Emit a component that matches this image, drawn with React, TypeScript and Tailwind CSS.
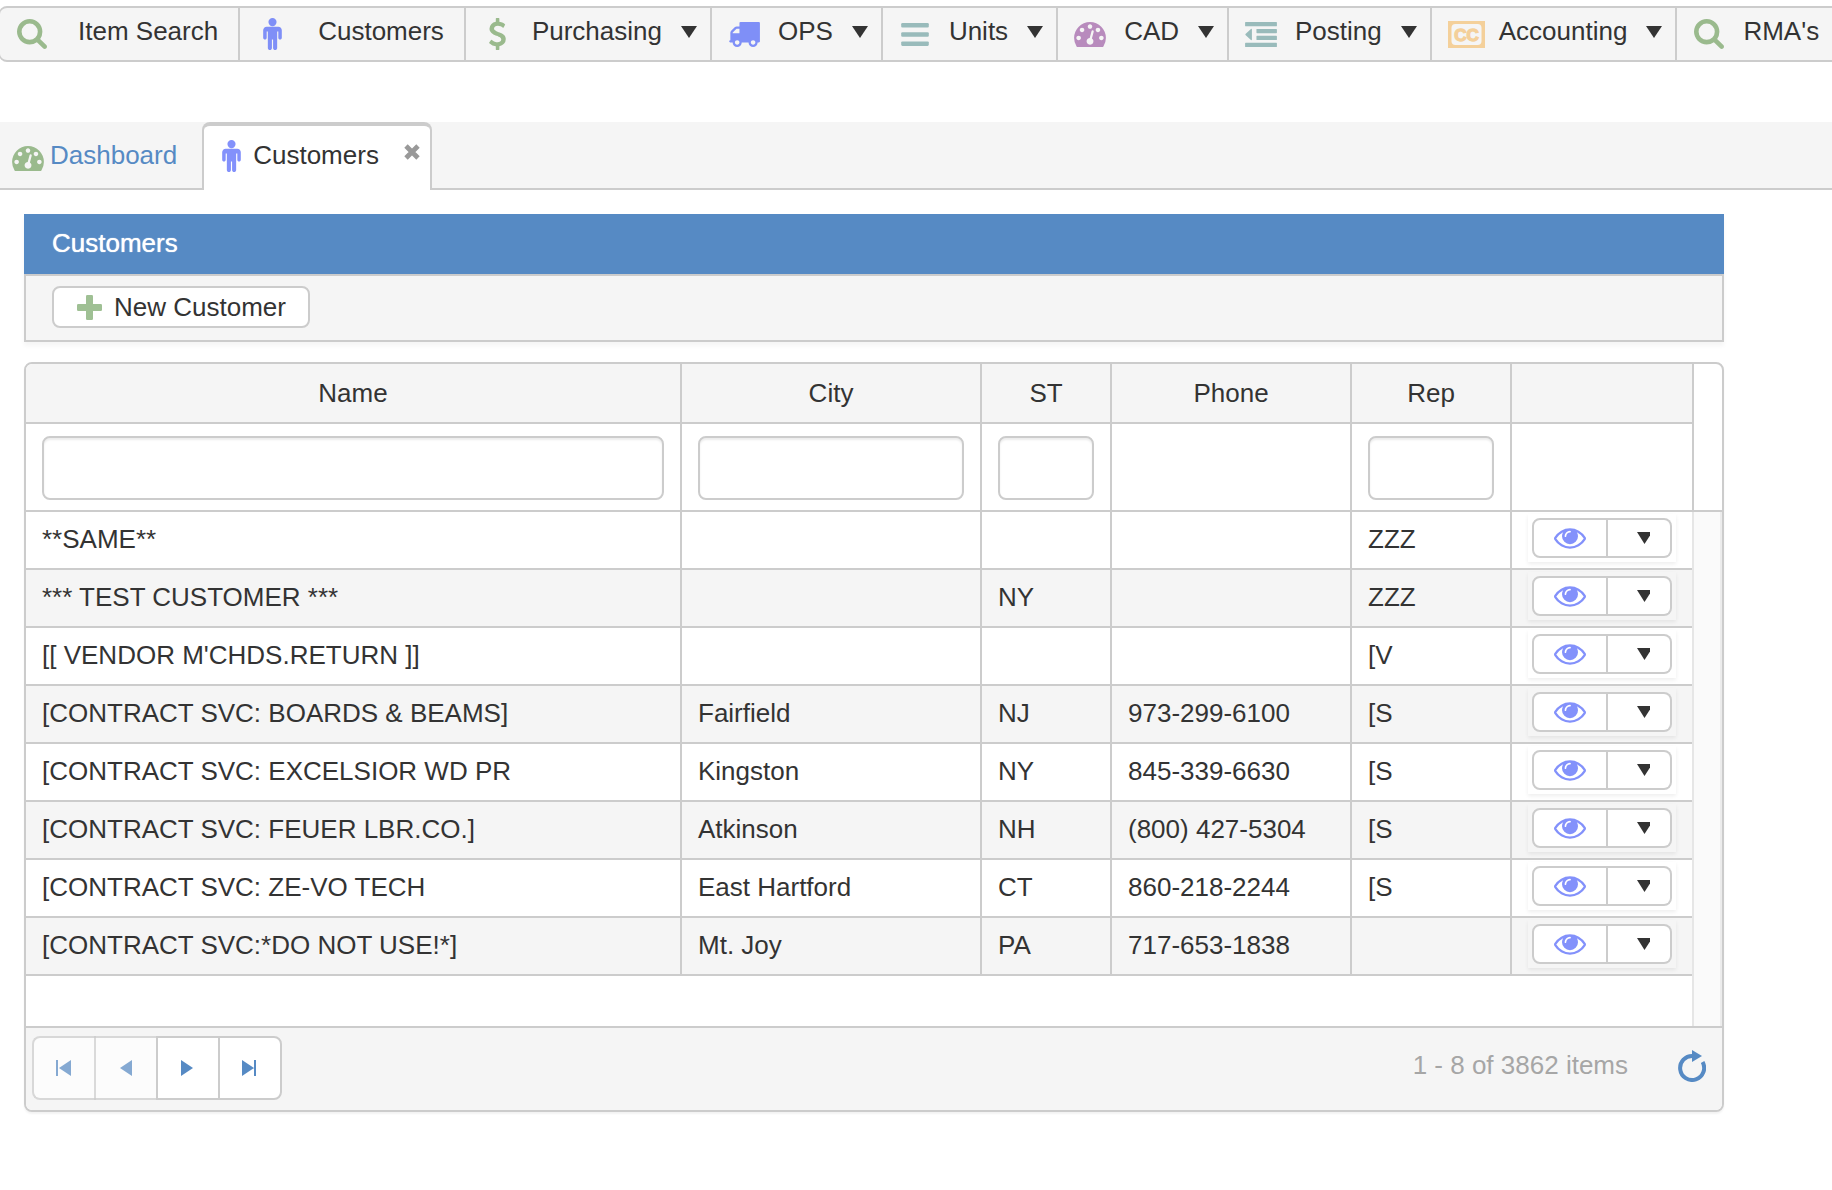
import React, { useMemo, useState } from 'react';

// Sample page of customers, the grid shows eight at a time
const sampleCustomers = [
  { id: 1, name: '**SAME**', city: '', st: '', phone: '', rep: 'ZZZ' },
  { id: 2, name: '*** TEST CUSTOMER ***', city: '', st: 'NY', phone: '', rep: 'ZZZ' },
  { id: 3, name: "[[ VENDOR M'CHDS.RETURN ]]", city: '', st: '', phone: '', rep: '[V' },
  { id: 4, name: '[CONTRACT SVC: BOARDS & BEAMS]', city: 'Fairfield', st: 'NJ', phone: '973-299-6100', rep: '[S' },
  { id: 5, name: '[CONTRACT SVC: EXCELSIOR WD PR', city: 'Kingston', st: 'NY', phone: '845-339-6630', rep: '[S' },
  { id: 6, name: '[CONTRACT SVC: FEUER LBR.CO.]', city: 'Atkinson', st: 'NH', phone: '(800) 427-5304', rep: '[S' },
  { id: 7, name: '[CONTRACT SVC: ZE-VO TECH', city: 'East Hartford', st: 'CT', phone: '860-218-2244', rep: '[S' },
  { id: 8, name: '[CONTRACT SVC:*DO NOT USE!*]', city: 'Mt. Joy', st: 'PA', phone: '717-653-1838', rep: '' },
];

type IconProps = { className?: string };

const SearchIcon = ({ className }: IconProps) => (
  <svg viewBox="64 128 1664 1664" fill="currentColor" className={className} aria-hidden="true">
    <path d="M1216 832q0-185-131.5-316.5t-316.5-131.5-316.5 131.5-131.5 316.5 131.5 316.5 316.5 131.5 316.5-131.5 131.5-316.5zm512 832q0 52-38 90t-90 38q-54 0-90-38l-343-342q-179 124-399 124-143 0-273.5-55.5t-225-150-150-225-55.5-273.5 55.5-273.5 150-225 225-150 273.5-55.5 273.5 55.5 225 150 150 225 55.5 273.5q0 220-124 399l343 343q37 37 37 90z" />
  </svg>
);

const PersonIcon = ({ className }: IconProps) => (
  <svg viewBox="256 32 1024 1760" fill="currentColor" className={className} aria-hidden="true">
    <path d="M1280 704v416q0 40-28 68t-68 28-68-28-28-68v-352h-64v912q0 46-33 79t-79 33-79-33-33-79v-464h-64v464q0 46-33 79t-79 33-79-33-33-79v-912h-64v352q0 40-28 68t-68 28-68-28-28-68v-416q0-80 56-136t136-56h640q80 0 136 56t56 136zm-288-448q0 93-65.5 158.5t-158.5 65.5-158.5-65.5-65.5-158.5 65.5-158.5 158.5-65.5 158.5 65.5 65.5 158.5z" />
  </svg>
);

const DollarIcon = ({ className }: IconProps) => (
  <svg viewBox="430 0 940 1792" fill="currentColor" className={className} aria-hidden="true">
    <path d="M1362 1185q0 153-99.5 263.5t-258.5 136.5v175q0 14-9 23t-23 9h-135q-13 0-22.5-9.5t-9.5-22.5v-175q-66-9-127.5-31t-101.5-44.5-74-48-46.5-37.5-17.5-18q-17-21-2-41l103-135q7-10 23-12 15-2 24 9l2 2q113 99 243 125 37 8 74 8 81 0 142.5-43t61.5-122q0-28-15-53t-33.5-42-58.5-37.5-66-32-80-32.5q-39-16-61.5-25t-61.5-26.5-62.5-31-56.5-35.5-53.5-42.5-43.5-49-35.5-58-21-66.5-8.5-78q0-138 98-242t255-134v-180q0-13 9.5-22.5t22.5-9.5h135q14 0 23 9t9 23v176q57 6 110.5 23t87 33.5 63.5 37.5 39 29 15 14q17 18 5 38l-81 146q-8 15-23 16-14 3-27-7-3-3-14.5-12t-39-26.5-58.5-32-74.5-26-85.5-11.5q-95 0-155 43t-60 111q0 26 8.5 48t29.5 41.5 39.5 33 56 31 60.5 27 70 27.5q53 20 81 31.5t76 35 75.5 42.5 62 50 53 63.5 31.5 76.5 13 94z" />
  </svg>
);

const TruckIcon = ({ className }: IconProps) => (
  <svg viewBox="0 256 1792 1408" fill="currentColor" className={className} aria-hidden="true">
    <path d="M640 1408q0-52-38-90t-90-38-90 38-38 90 38 90 90 38 90-38 38-90zm-384-512h384v-256h-158q-13 0-22 9l-195 195q-9 9-9 22v30zm1280 512q0-52-38-90t-90-38-90 38-38 90 38 90 90 38 90-38 38-90zm256-1088v1024q0 15-4 26.5t-13.5 18.5-16.5 11.5-23.5 6-22.5 2-25.5 0-22.5-.5q0 106-75 181t-181 75-181-75-75-181h-384q0 106-75 181t-181 75-181-75-75-181h-64q-3 0-22.5.5t-25.5 0-22.5-2-23.5-6-16.5-11.5-13.5-18.5-4-26.5q0-26 19-45t45-19v-320q0-8-.5-35t0-38 2.5-34.5 6.5-37 14-30.5 22.5-30l198-198q19-19 50.5-32t58.5-13h160v-192q0-26 19-45t45-19h1024q26 0 45 19t19 45z" />
  </svg>
);

const BarsIcon = ({ className }: IconProps) => (
  <svg viewBox="0 0 1536 1280" fill="currentColor" className={className} aria-hidden="true">
    <rect width="1536" height="256" rx="64" />
    <rect y="512" width="1536" height="256" rx="64" />
    <rect y="1024" width="1536" height="256" rx="64" />
  </svg>
);

const GaugeIcon = ({ className }: IconProps) => (
  <svg viewBox="0 256 1792 1408" fill="currentColor" className={className} aria-hidden="true">
    <path d="M384 1152q0-53-37.5-90.5t-90.5-37.5-90.5 37.5-37.5 90.5 37.5 90.5 90.5 37.5 90.5-37.5 37.5-90.5zm192-448q0-53-37.5-90.5t-90.5-37.5-90.5 37.5-37.5 90.5 37.5 90.5 90.5 37.5 90.5-37.5 37.5-90.5zm428 481l101-382q6-26-7.5-48.5t-38.5-29.5-48 6.5-30 39.5l-101 382q-60 5-107 43.5t-63 98.5q-20 77 20 146t117 89 146-20 89-117q16-60-6-117t-72-91zm660-33q0-53-37.5-90.5t-90.5-37.5-90.5 37.5-37.5 90.5 37.5 90.5 90.5 37.5 90.5-37.5 37.5-90.5zm-640-640q0-53-37.5-90.5t-90.5-37.5-90.5 37.5-37.5 90.5 37.5 90.5 90.5 37.5 90.5-37.5 37.5-90.5zm448 192q0-53-37.5-90.5t-90.5-37.5-90.5 37.5-37.5 90.5 37.5 90.5 90.5 37.5 90.5-37.5 37.5-90.5zm320 448q0 261-141 483-19 29-54 29h-1402q-35 0-54-29-141-221-141-483 0-182 71-348t191-286 286-191 348-71 348 71 286 191 191 286 71 348z" />
  </svg>
);

const OutdentIcon = ({ className }: IconProps) => (
  <svg viewBox="0 0 1792 1408" fill="currentColor" className={className} aria-hidden="true">
    <rect width="1792" height="240" rx="32" />
    <rect x="640" y="389" width="1152" height="240" rx="32" />
    <rect x="640" y="779" width="1152" height="240" rx="32" />
    <rect y="1168" width="1792" height="240" rx="32" />
    <path d="M384 416v576q0 32-32 32-14 0-23-9L23 727q-18-23 0-46L329 393q9-9 23-9 32 0 32 32z" />
  </svg>
);

const CaptionIcon = ({ className }: IconProps) => (
  <svg viewBox="0 0 37 27" className={className} aria-hidden="true">
    <rect width="37" height="27" fill="currentColor" />
    <rect x="3.5" y="3" width="30" height="21" rx="4" fill="#f5f5f5" />
    <text x="18.5" y="19.8" textAnchor="middle" fill="currentColor" stroke="currentColor" strokeWidth="1.3" fontSize="17" fontWeight="bold" fontFamily="Liberation Sans, Arial, sans-serif">CC</text>
  </svg>
);

const EyeIcon = ({ className }: IconProps) => (
  <svg viewBox="0 384 1792 1152" fill="currentColor" className={className} aria-hidden="true">
    <path d="M1664 960q-152-236-381-353 61 104 61 225 0 185-131.5 316.5t-316.5 131.5-316.5-131.5-131.5-316.5q0-121 61-225-229 117-381 353 133 205 333.5 326.5t434.5 121.5 434.5-121.5 333.5-326.5zm-720-384q0-20-14-34t-34-14q-125 0-214.5 89.5t-89.5 214.5q0 20 14 34t34 14 34-14 14-34q0-86 61-147t147-61q20 0 34-14t14-34zm848 384q0 34-20 69-140 230-376.5 368.5t-499.5 138.5-499.5-139-376.5-368q-20-35-20-69t20-69q140-229 376.5-368t499.5-139 499.5 139 376.5 368q20 35 20 69z" />
  </svg>
);

const PlusIcon = ({ className }: IconProps) => (
  <svg viewBox="0 0 25 25" fill="currentColor" className={className} aria-hidden="true">
    <rect x="9" width="7" height="25" rx="1.2" />
    <rect y="9" width="25" height="7" rx="1.2" />
  </svg>
);

const CloseIcon = ({ className }: IconProps) => (
  <svg viewBox="0 0 16 16" stroke="currentColor" strokeWidth="4.8" className={className} aria-hidden="true">
    <path d="M2 2l12 12M14 2L2 14" />
  </svg>
);

const RefreshIcon = ({ className }: IconProps) => (
  <svg viewBox="0 0 28 32" fill="none" className={className} aria-hidden="true">
    <path d="M15 6a12 12 0 1 0 9.6 6.1" stroke="currentColor" strokeWidth="4" />
    <path d="M14 0l10 6-10 6z" fill="currentColor" />
  </svg>
);

const CaretDown = ({ className }: IconProps) => (
  <svg viewBox="0 0 16 12" fill="currentColor" className={className} aria-hidden="true">
    <path d="M0 0h16L8 12z" />
  </svg>
);

const menuItems = [
  { label: 'Item Search', icon: <SearchIcon className="h-[30px] w-[30px] text-[#9aba8d]" />, hasMenu: false, iconGap: 'mr-[30px]' },
  { label: 'Customers', icon: <PersonIcon className="h-8 w-[19px] text-[#7f8ff7]" />, hasMenu: false, iconGap: 'mr-[30px]' },
  { label: 'Purchasing', icon: <DollarIcon className="h-8 w-[17px] text-[#9aba8d]" />, hasMenu: true, iconGap: 'mr-[18px]' },
  { label: 'OPS', icon: <TruckIcon className="h-[25px] w-8 text-[#7f8ff7]" />, hasMenu: true, iconGap: 'mr-[18px]' },
  { label: 'Units', icon: <BarsIcon className="h-[23px] w-7 text-[#99bbbb]" />, hasMenu: true, iconGap: 'mr-[18px]' },
  { label: 'CAD', icon: <GaugeIcon className="h-[25px] w-8 text-[#b88bbd]" />, hasMenu: true, iconGap: 'mr-[18px]' },
  { label: 'Posting', icon: <OutdentIcon className="h-[25px] w-8 text-[#99bbbb]" />, hasMenu: true, iconGap: 'mr-[18px]' },
  { label: 'Accounting', icon: <CaptionIcon className="h-[27px] w-[37px] text-[#f4d09a]" />, hasMenu: true, iconGap: 'mr-[14px]' },
  { label: "RMA's", icon: <SearchIcon className="h-[30px] w-[30px] text-[#9aba8d]" />, hasMenu: false, iconGap: 'mr-[18px]' },
];

// The body has a slightly narrower last column, the scrollbar edge takes the rest
const GridColumns = ({ actionsWidth }: { actionsWidth: string }) => (
  <colgroup>
    <col />
    <col className="w-[300px]" />
    <col className="w-[130px]" />
    <col className="w-[240px]" />
    <col className="w-[160px]" />
    <col className={actionsWidth} />
  </colgroup>
);

const App = () => {
  const [filters, setFilters] = useState({ name: '', city: '', st: '', rep: '' });

  const customers = useMemo(() => {
    const matches = (value: string, filter: string) => value.toLowerCase().includes(filter.trim().toLowerCase());
    return sampleCustomers.filter(c =>
      matches(c.name, filters.name) && matches(c.city, filters.city) && matches(c.st, filters.st) && matches(c.rep, filters.rep)
    );
  }, [filters]);

  const renderFilter = (key: 'name' | 'city' | 'st' | 'rep', label: string) => (
    <input
      type="text"
      aria-label={`Filter by ${label}`}
      value={filters[key]}
      onChange={(e) => setFilters({ ...filters, [key]: e.target.value })}
      className="block h-16 w-full rounded-lg border-2 border-[#ccc] bg-white px-3 shadow-[inset_0_2px_2px_rgba(0,0,0,0.075)] outline-none"
    />
  );

  return (
    <div className="min-h-screen overflow-hidden bg-white pt-1.5 text-[26px] leading-[30px] text-[#333] font-['Liberation_Sans',Arial,sans-serif]">
      {/* Main menu */}
      <nav className="overflow-hidden">
        <ul className="-ml-px flex w-max min-w-full rounded-l-lg border-y-2 border-l border-[#ccc] bg-[#f5f5f5]">
          {menuItems.map((item) => (
            <li key={item.label} className="shrink-0 border-r-2 border-[#ccc]">
              <button type="button" className={`flex h-13 items-center whitespace-nowrap pl-4 ${item.hasMenu ? 'pr-[13px]' : 'pr-5'}`}>
                <span className={`flex min-w-8 items-center justify-center ${item.iconGap}`}>{item.icon}</span>
                <span className="pb-1.5">{item.label}</span>
                {item.hasMenu && <CaretDown className="mb-1 ml-[19px] h-3 w-4" />}
              </button>
            </li>
          ))}
        </ul>
      </nav>

      {/* Open tabs */}
      <div className="mt-15 flex h-17 items-stretch bg-[#f5f5f5]">
        <div className="flex border-b-2 border-[#ccc] pl-3 pr-[25px]">
          <a href="#dashboard" className="flex items-center text-[#568ac4]">
            <GaugeIcon className="mr-1.5 mt-1.5 h-[25px] w-8 text-[#9aba8d]" />
            Dashboard
          </a>
        </div>
        <div className="flex items-center rounded-t-lg border-x-2 border-t-4 border-[#ccc] bg-white pb-1.5 pl-[18px] pr-2.5">
          <a href="#customers" className="flex items-center">
            <PersonIcon className="mr-3 mt-0.5 h-8 w-[19px] text-[#8391fb]" />
            Customers
          </a>
          <button type="button" aria-label="Close Customers" className="mb-1.5 ml-[25px]">
            <CloseIcon className="h-4 w-4 text-[#999]" />
          </button>
        </div>
        <div className="flex-1 border-b-2 border-[#ccc]" />
      </div>

      <main className="ml-6 mr-[108px] mt-6">
        {/* Panel title and toolbar */}
        <section className="shadow-[0_4px_4px_rgba(0,0,0,0.04)]">
          <h1 className="h-15 bg-[#568ac4] px-7 py-3.5 text-white [text-shadow:0_0_1px_#fff]">Customers</h1>
          <div className="border-2 border-[#ccc] bg-[#f5f5f5] px-[26px] pb-3 pt-2.5">
            <button type="button" className="flex h-[42px] items-center rounded-lg border-2 border-[#ccc] bg-white pl-[23px] pr-[22px]">
              <PlusIcon className="mr-3 h-[25px] w-[25px] text-[#9fc094]" />
              New Customer
            </button>
          </div>
        </section>

        {/* Customer grid */}
        <section className="mt-5 overflow-hidden rounded-lg border-2 border-[#ccc] bg-white shadow-[0_2px_2px_rgba(0,0,0,0.05)]">
          <div className="flex border-b-2 border-[#ccc]">
            <table className="min-w-0 flex-1 table-fixed border-separate border-spacing-0">
              <GridColumns actionsWidth="w-[182px]" />
              <thead>
                <tr className="h-15 bg-[#f5f5f5]">
                  {['Name', 'City', 'ST', 'Phone', 'Rep', ''].map((heading, i) => (
                    <th key={i} scope="col" className="border-b-2 border-r-2 border-[#ccc] p-0 text-center font-normal">{heading}</th>
                  ))}
                </tr>
                <tr>
                  <td className="border-r-2 border-[#ccc] px-4 pb-2.5 pt-3">{renderFilter('name', 'name')}</td>
                  <td className="border-r-2 border-[#ccc] px-4 pb-2.5 pt-3">{renderFilter('city', 'city')}</td>
                  <td className="border-r-2 border-[#ccc] px-4 pb-2.5 pt-3">{renderFilter('st', 'state')}</td>
                  <td className="border-r-2 border-[#ccc]" />
                  <td className="border-r-2 border-[#ccc] px-4 pb-2.5 pt-3">{renderFilter('rep', 'rep')}</td>
                  <td className="border-r-2 border-[#ccc]" />
                </tr>
              </thead>
            </table>
            <div className="w-7 shrink-0" />
          </div>

          <div className="flex border-b-2 border-[#ccc]">
            <div className="min-w-0 flex-1 border-r-2 border-[#e6e6e6] pb-[50px]">
              <table className="w-full table-fixed border-separate border-spacing-0">
                <GridColumns actionsWidth="w-[180px]" />
                <tbody>
                  {customers.map((customer) => (
                    <tr key={customer.id} className="h-[58px] even:bg-[#f5f5f5]">
                      {[customer.name, customer.city, customer.st, customer.phone, customer.rep].map((value, i) => (
                        <td key={i} className="whitespace-nowrap border-b-2 border-r-2 border-[#ccc] px-4 pb-0.5 pt-0">{value}</td>
                      ))}
                      <td className="border-b-2 border-[#ccc] pb-1.5 pl-4 pr-0 pt-0.5">
                        <div className="flex h-12 w-[148px] p-1 shadow-[0_2px_4px_rgba(0,0,0,0.07)]">
                          <button type="button" aria-label={`View ${customer.name}`} className="flex h-10 w-[76px] items-center justify-center rounded-l-lg border-2 border-[#ccc] bg-white">
                            <EyeIcon className="h-[21px] w-8 text-[#8391fb]" />
                          </button>
                          <button type="button" aria-label={`More actions for ${customer.name}`} className="flex h-10 w-16 items-center justify-end rounded-r-lg border-2 border-l-0 border-[#ccc] bg-white pr-5">
                            <svg viewBox="0 0 13 12" fill="currentColor" className="h-3 w-[13px]" aria-hidden="true">
                              <path d="M0 0h13v3.5L7.5 12z" />
                            </svg>
                          </button>
                        </div>
                      </td>
                    </tr>
                  ))}
                </tbody>
              </table>
            </div>
            {/* scrollbar track */}
            <div className="w-7 shrink-0 border-r-2 border-[#ececec] bg-[#fafafa]" />
          </div>

          {/* Pager */}
          <footer className="flex items-center bg-[#f5f5f5] pb-2.5 pl-1.5 pr-4 pt-2">
            <div className="flex text-[#568ac4]">
              <button type="button" disabled aria-label="First page" className="flex size-16 items-center justify-center rounded-l-lg border-2 border-r-0 border-[#ccc] bg-white pr-0.5 opacity-70">
                <svg viewBox="0 0 16 16" fill="currentColor" className="size-4" aria-hidden="true"><path d="M0 0h2v16H0zM15 0v16L3 8z" /></svg>
              </button>
              <button type="button" disabled aria-label="Previous page" className="-ml-0.5 flex size-16 items-center justify-center border-2 border-r-0 border-[#ccc] bg-white pr-0.5 opacity-70">
                <svg viewBox="0 0 16 16" fill="currentColor" className="size-4" aria-hidden="true"><path d="M14 0v16L2 8z" /></svg>
              </button>
              <button type="button" aria-label="Next page" className="relative -ml-0.5 flex size-16 items-center justify-center border-2 border-[#ccc] bg-white">
                <svg viewBox="0 0 16 16" fill="currentColor" className="size-4" aria-hidden="true"><path d="M1 0v16l12-8z" /></svg>
              </button>
              <button type="button" aria-label="Last page" className="relative -ml-0.5 flex size-16 items-center justify-center rounded-r-lg border-2 border-[#ccc] bg-white">
                <svg viewBox="0 0 16 16" fill="currentColor" className="size-4" aria-hidden="true"><path d="M0 0v16l12-8zM12 0h2v16h-2z" /></svg>
              </button>
            </div>
            <span className="ml-auto pb-1.5 text-[#a6a6a6]">1 - 8 of 3862 items</span>
            <button type="button" aria-label="Refresh" className="mb-1 ml-[50px] text-[#568ac4]">
              <RefreshIcon className="h-8 w-7" />
            </button>
          </footer>
        </section>
      </main>
    </div>
  );
};

export default App;
